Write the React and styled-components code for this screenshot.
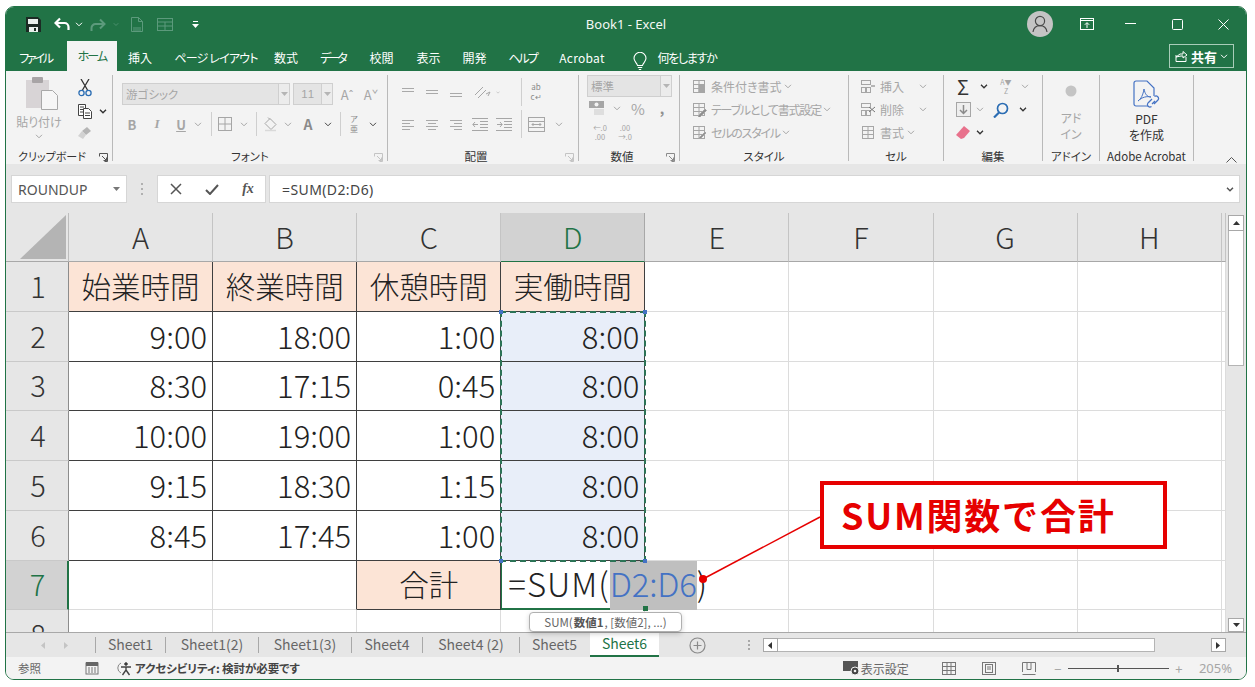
import React from "react";
import styled, { createGlobalStyle } from "styled-components";

const JP = `"Noto Sans CJK JP", "Noto Sans", sans-serif`;

const GlobalStyle = createGlobalStyle`
  html, body {
    margin: 0;
    padding: 0;
    background: #fff;
    overflow: hidden;
  }
  * {
    box-sizing: border-box;
  }
`;

const Page = styled.div`
  width: 1255px;
  height: 687px;
  padding: 6px 0 0 5px;
  font-family: ${JP};
  font-feature-settings: "palt";
`;

const Window = styled.div`
  position: relative;
  width: 1242px;
  height: 674px;
  border: 1px solid #217346;
  border-radius: 9px;
  overflow: hidden;
  display: flex;
  flex-direction: column;
  background: #f3f3f3;
`;

/* title bar */
const TitleBar = styled.div`
  height: 34px;
  flex: none;
  background: #217346;
  display: flex;
  align-items: center;
  color: #fff;
`;

const Slot = styled.span`
  width: ${(p) => p.$w}px;
  flex: none;
  display: inline-flex;
  align-items: center;
  justify-content: center;
  font-size: ${(p) => p.$size || 12}px;
  color: ${(p) => p.$color || "#a6a6a6"};
  font-weight: ${(p) => p.$weight || 400};
  font-style: ${(p) => p.$italic ? "italic" : "normal"};
  text-decoration: ${(p) => p.$under ? "underline" : "none"};
  font-family: ${(p) => p.$serif ? `"Liberation Serif", serif` : "inherit"};
  white-space: nowrap;
`;

const StackSlot = styled(Slot)`
  flex-direction: column;
  line-height: ${(p) => p.$lh}px;
`;

const TitleText = styled.div`
  width: 812px;
  flex: none;
  padding: 0 5px 0 15px;
  font-size: 13px;
  font-family: "Noto Sans", sans-serif;
  text-align: center;
  color: #f4f8f5;
`;

const Avatar = styled.span`
  width: 26px;
  height: 26px;
  flex: none;
  border-radius: 50%;
  background: #c4c4c4;
  display: flex;
  align-items: center;
  justify-content: center;
`;

/* ribbon tabs */
const TabRow = styled.div`
  height: 30px;
  flex: none;
  background: #217346;
  display: flex;
  align-items: flex-end;
  padding-left: 2px;
`;

const RibbonTab = styled.div`
  height: ${(p) => p.$active ? 30 : 28}px;
  width: ${(p) => p.$w}px;
  flex: none;
  display: flex;
  align-items: center;
  justify-content: center;
  font-size: 12px;
  letter-spacing: ${(p) => p.$ls || 0}px;
  color: ${(p) => p.$active ? "#217346" : "#fff"};
  background: ${(p) => p.$active ? "#f3f3f3" : "transparent"};
  padding-bottom: ${(p) => p.$active ? 2 : 0}px;
  white-space: nowrap;
`;

const ShareBtn = styled.div`
  margin-left: auto;
  margin-right: 12px;
  margin-bottom: 3px;
  width: 65px;
  height: 24px;
  border: 1px solid #a9cdb9;
  display: flex;
  align-items: center;
  justify-content: center;
  gap: 3px;
  color: #fff;
  font-size: 13px;
  font-weight: 700;
`;

/* ribbon */
const Ribbon = styled.div`
  height: 93px;
  flex: none;
  display: flex;
  padding-top: 4px;
  padding-bottom: 3px;
  background: #f3f3f3;
  position: relative;
`;

const Group = styled.div`
  width: ${(p) => p.$w}px;
  flex: none;
  display: flex;
  flex-direction: column;
  border-right: 1px solid #b9b9b9;
  position: relative;
`;

const GroupBody = styled.div`
  flex: 1;
  min-height: 0;
  padding: ${(p) => p.$top || 0}px 0 0 ${(p) => p.$left || 0}px;
  display: flex;
  flex-direction: ${(p) => p.$dir || "column"};
`;

const GroupLabel = styled.div`
  height: 16px;
  margin-bottom: -3px;
  line-height: 16px;
  text-align: center;
  font-size: ${(p) => p.$size || 11.5}px;
  color: #333;
  white-space: nowrap;
  padding-right: ${(p) => p.$pr || 0}px;
`;

const Launcher = styled.svg`
  position: absolute;
  right: 4px;
  bottom: -1px;
  width: 9px;
  height: 9px;
`;

const RibRow = styled.div`
  height: ${(p) => p.$h}px;
  display: flex;
  align-items: center;
  padding-left: ${(p) => p.$left || 0}px;
`;

const Combo = styled.div`
  width: ${(p) => p.$w}px;
  height: 22px;
  flex: none;
  margin-right: ${(p) => p.$mr || 0}px;
  background: #e4e4e4;
  border: 1px solid #cfcfcf;
  display: flex;
  align-items: center;
  padding-left: 3px;
  font-size: 11.5px;
  color: #a6a6a6;
`;

const SizeCombo = styled(Combo)`
  font-family: "Liberation Sans", sans-serif;
  letter-spacing: 1px;
`;

const ComboDrop = styled.span`
  margin-left: auto;
  width: 11px;
  height: 20px;
  background: #ececec;
  border-left: 1px solid #cfcfcf;
  display: flex;
  align-items: center;
  justify-content: center;
`;

const Vsep = styled.span`
  width: 1px;
  height: ${(p) => p.$h || 24}px;
  background: #cfcfcf;
  display: block;
`;

const ListText = styled.span`
  font-size: 12px;
  letter-spacing: ${(p) => p.$ls || 0}px;
  color: #a6a6a6;
  white-space: nowrap;
  margin-left: 4px;
`;

const PasteCol = styled.div`
  width: 50px;
  margin-left: 3px;
  display: flex;
  flex-direction: column;
  align-items: center;
  font-size: 12px;
  color: #a6a6a6;
`;

const PasteIcon = styled.svg`
  margin-left: 12px;
  flex: none;
`;

const PasteLabel = styled.span`
  margin-top: 2px;
`;

const PasteCaret = styled.span`
  margin-top: 4px;
  display: flex;
`;

const ClipCol = styled.div`
  display: flex;
  flex-direction: column;
  padding-top: 1px;
`;

const BigCol = styled.div`
  flex: 1;
  display: flex;
  flex-direction: column;
  align-items: center;
  font-size: 12px;
  line-height: 16px;
  color: ${(p) => p.$muted ? "#a6a6a6" : "#333"};
  padding-top: ${(p) => p.$top}px;
`;

const AddinDot = styled.svg`
  flex: none;
  margin-bottom: 13px;
`;

const Collapse = styled.span`
  position: absolute;
  right: 9px;
  bottom: 1px;
  display: flex;
`;

/* formula bar */
const FormulaBar = styled.div`
  height: 49px;
  flex: none;
  background: #e6e6e6;
  padding: 11px 6px 10px 5px;
  display: flex;
`;

const NameBox = styled.div`
  width: 116px;
  background: #fff;
  border: 1px solid #d6d6d6;
  display: flex;
  align-items: center;
  justify-content: space-between;
  padding: 0 6px;
  font-size: 14px;
  font-family: "Noto Sans", sans-serif;
  color: #555;
`;

const FxButtons = styled.div`
  width: 109px;
  background: #fff;
  border: 1px solid #d6d6d6;
  display: flex;
  align-items: center;
  margin-right: 3px;
`;

const FormulaInput = styled.div`
  flex: 1;
  background: #fff;
  border: 1px solid #d6d6d6;
  display: flex;
  align-items: center;
  justify-content: space-between;
  padding: 0 5px 0 12px;
  font-size: 14px;
  letter-spacing: 0.4px;
  font-family: "Noto Sans", sans-serif;
  color: #444;
`;

/* sheet */
const SheetArea = styled.div`
  height: 419px;
  flex: none;
  display: flex;
  background: #fff;
  overflow: hidden;
`;

const Cells = styled.div`
  width: 1220px;
  flex: none;
  position: relative;
  display: grid;
  grid-template-columns: 63px repeat(8, 144.1px) 4.2px;
  grid-template-rows: 49px repeat(8, 49.75px);
  font-size: 29.5px;
  line-height: 1;
  color: #222;
`;

const Corner = styled.div`
  background: #e6e6e6;
  border-bottom: 1px solid #a8a8a8;
  border-right: 1px solid #bdbdbd;
  display: flex;
  align-items: flex-end;
  justify-content: flex-end;
  padding: 0 2px 2px 0;
`;

const ColHead = styled.div`
  background: ${(p) => p.$on ? "#d2d2d2" : "#e6e6e6"};
  color: ${(p) => p.$on ? "#217346" : "#333"};
  border-right: 1px solid ${(p) => p.$on ? "#a8a8a8" : "#c4c4c4"};
  border-bottom: 1px solid ${(p) => p.$on ? "#217346" : "#a8a8a8"};
  display: flex;
  align-items: center;
  justify-content: center;
  font-size: 29px;
  font-weight: 300;
  padding-bottom: 2px;
`;

const RowHead = styled.div`
  background: ${(p) => p.$on ? "#d2d2d2" : "#e6e6e6"};
  color: ${(p) => p.$on ? "#217346" : "#333"};
  border-right: ${(p) => p.$on ? "2px solid #217346" : "1px solid #8c8c8c"};
  border-bottom: 1px solid #c9c9c9;
  display: flex;
  align-items: center;
  justify-content: center;
  font-size: 29px;
  font-weight: 300;
  padding-left: 2px;
  padding-bottom: 2px;
`;

const Cell = styled.div`
  background: ${(p) => p.$bg || "#fff"};
  border-right: 1px solid ${(p) => p.$line || p.$edge ? "#3f3f3f" : "#dcdcdc"};
  border-bottom: 1px solid ${(p) => p.$line ? "#3f3f3f" : "#dcdcdc"};
  display: flex;
  align-items: center;
  justify-content: ${(p) => p.$right ? "flex-end" : "center"};
  padding-right: ${(p) => p.$right ? 5 : 0}px;
  padding-bottom: 2px;
  font-size: ${(p) => p.$right ? 31 : 29.5}px;
  font-weight: 300;
  white-space: nowrap;
`;

const ActiveCell = styled.div`
  background: #fff;
  border-left: 1px solid #217346;
  border-bottom: 2px solid #217346;
  display: flex;
  align-items: stretch;
  padding-left: 6px;
  font-size: 33px;
  font-weight: 300;
  white-space: nowrap;
  position: relative;
  z-index: 2;
`;

const CellText = styled.span`
  display: flex;
  align-items: center;
  padding-bottom: 2px;
  flex: none;
`;

const FuncText = styled(CellText)`
  letter-spacing: 1px;
`;

const RefText = styled(CellText)`
  background: #bfbfbf;
  color: #4472c4;
  margin-bottom: -2px;
  padding-bottom: 4px;
  letter-spacing: -0.2px;
`;

const Marquee = styled.div`
  position: absolute;
  grid-column: 5 / 6;
  grid-row: 3 / 8;
  inset: -1px;
  border: 2px dashed #2c7356;
  z-index: 3;
`;

const Handle = styled.span`
  position: absolute;
  width: 4px;
  height: 4px;
  background: #4472c4;
  ${(p) => p.$y}: -3px;
  ${(p) => p.$x}: -3px;
`;

const FillHandle = styled.span`
  position: absolute;
  right: -3px;
  bottom: -3px;
  width: 5px;
  height: 5px;
  background: #217346;
`;

/* vertical scroll */
const VScroll = styled.div`
  flex: 1;
  background: #e6e6e6;
  padding: 2px 2px 0 2px;
  display: flex;
  flex-direction: column;
  align-items: stretch;
`;

const ScrollBtn = styled.div`
  width: ${(p) => p.$w || "auto"};
  height: ${(p) => p.$h || 16}px;
  flex: none;
  background: #fff;
  border: 1px solid #a8a8a8;
  display: flex;
  align-items: center;
  justify-content: center;
`;

const VThumb = styled.div`
  height: 135px;
  flex: none;
  background: #fff;
  border: 1px solid #b4b4b4;
  border-top: 0;
`;

const VSpacer = styled.div`
  flex: 1;
`;

/* sheet tabs */
const SheetBar = styled.div`
  height: 25px;
  flex: none;
  background: #e6e6e6;
  border-top: 1px solid #a8a8a8;
  display: flex;
  align-items: center;
  font-size: 14px;
  font-family: ${JP};
  font-feature-settings: normal;
  color: #666;
`;

const SheetTab = styled.div`
  height: 24px;
  flex: none;
  width: ${(p) => p.$w}px;
  display: flex;
  align-items: center;
  justify-content: center;
  padding-bottom: 2px;
  color: ${(p) => p.$active ? "#217346" : "#666"};
  background: ${(p) => p.$active ? "#fff" : "transparent"};
  border-bottom: ${(p) => p.$active ? "2px solid #217346" : "0"};
  margin-left: ${(p) => p.$active ? 1 : 0}px;
  white-space: nowrap;
`;

const TabSep = styled.span`
  width: 1px;
  height: 16px;
  background: #a8a8a8;
  flex: none;
`;

const HScroll = styled.div`
  width: 377px;
  height: 14px;
  flex: none;
  background: #fff;
  border: 1px solid #b4b4b4;
  border-left: 0;
`;

/* status bar */
const StatusBar = styled.div`
  height: 22px;
  flex: none;
  background: #f3f3f3;
  display: flex;
  align-items: center;
  font-size: 11.5px;
  color: #666;
  padding-left: 12px;
`;

const A11y = styled.span`
  font-weight: 700;
  color: #444;
  margin-left: 3px;
  letter-spacing: -0.1px;
  white-space: nowrap;
`;

const ViewSetting = styled.span`
  font-size: 12px;
  white-space: nowrap;
`;

const Zoomer = styled.span`
  width: 101px;
  height: 1px;
  background: #555;
  flex: none;
  position: relative;
  display: block;
`;

const ZoomTick = styled.span`
  position: absolute;
  left: 49px;
  top: -3px;
  width: 2px;
  height: 7px;
  background: #555;
`;

const ZoomPct = styled.span`
  font-size: 13px;
  font-family: "Noto Sans", sans-serif;
  color: #a6a6a6;
  margin-left: 10px;
`;

const StatusRight = styled.div`
  margin-left: auto;
  display: flex;
  align-items: center;
`;

/* overlays */
const Tooltip = styled.div`
  position: absolute;
  left: 523px;
  top: 605px;
  width: 153px;
  height: 20px;
  background: #fff;
  border: 1px solid #b0b0b0;
  border-radius: 4px;
  box-shadow: 0 2px 5px rgba(0, 0, 0, 0.18);
  display: flex;
  align-items: center;
  justify-content: center;
  font-size: 11.5px;
  color: #666;
  white-space: nowrap;
  z-index: 5;
  b {
    color: #555;
    margin: 0 1px;
  }
`;

const Callout = styled.div`
  position: absolute;
  left: 814px;
  top: 474px;
  width: 347px;
  height: 68px;
  background: #fff;
  border: 4px solid #e60000;
  display: flex;
  align-items: center;
  padding-left: 17px;
  padding-bottom: 2px;
  color: #e60000;
  font-size: 36px;
  font-weight: 700;
  font-feature-settings: normal;
  letter-spacing: 1.8px;
  white-space: nowrap;
  z-index: 6;
`;

const Leader = styled.svg`
  position: absolute;
  left: 684px;
  top: 502px;
  width: 135px;
  height: 80px;
  z-index: 6;
`;

/* icons */
const Caret = ({ c = "#a6a6a6", sw = 1 }) => (
  <svg width="8" height="5" viewBox="0 0 8 5" fill="none" stroke={c} strokeWidth={sw}>
    <path d="M1 .8l3 3 3-3" />
  </svg>
);

const Tri = ({ dir = "down", c = "#333" }) => {
  const d = { down: "M0 1h7L3.5 5z", up: "M0 5h7L3.5 1z", left: "M5 0v7L1 3.5z", right: "M1 0v7l4-3.5z" }[dir];
  return (
    <svg width="7" height="7" viewBox="0 0 7 7" fill={c}>
      <path d={d} />
    </svg>
  );
};

const Lines = ({ rows, c = "#a9a9a9" }) => (
  <svg width="14" height="12" viewBox="0 0 14 12" stroke={c} strokeWidth="1">
    {rows.map(([y, x1, x2]) => (
      <line key={y} x1={x1} x2={x2} y1={y + 0.5} y2={y + 0.5} />
    ))}
  </svg>
);

const LauncherIcon = ({ c = "#8a8a8a" }) => (
  <Launcher viewBox="0 0 9 9" fill="none" stroke={c}>
    <path d="M.5 3.5v-3h8v8h-3M3 3l4.5 4.5M7.5 4.5v3h-3" />
  </Launcher>
);

const CellGlyph = ({ kind }) => (
  <svg width="16" height="15" viewBox="0 0 16 15" fill="none" stroke="#a6a6a6">
    <rect x="2.5" y="1.5" width="11" height="12" />
    <path d="M2.5 5.5h11M2.5 9.5h11M8 1.5v12" />
    {kind === "cond" && <rect x="8" y="6" width="5" height="7" fill="#a6a6a6" />}
    {kind === "table" && <path d="M7 14l7-7 1.5 1.5-7 7z" fill="#8f8f8f" />}
    {kind === "style" && <path d="M8 13l6-6 1 1-6 6z" fill="#8f8f8f" />}
  </svg>
);

const InsGlyph = ({ x }) => (
  <svg width="16" height="15" viewBox="0 0 16 15" fill="none" stroke="#a6a6a6">
    <rect x="1.5" y="1.5" width="9" height="4" />
    <rect x="1.5" y="8.5" width="4" height="5" />
    <rect x="6.5" y="8.5" width="4" height="5" />
    {x ? <path d="M9 5l6 5m0-5l-6 5" stroke="#777" /> : <path d="M11 7h4" stroke="#777" />}
  </svg>
);

const columns = ["A", "B", "C", "D", "E", "F", "G", "H"];
const heads = ["始業時間", "終業時間", "休憩時間", "実働時間"];
const data = [
  ["9:00", "18:00", "1:00", "8:00"],
  ["8:30", "17:15", "0:45", "8:00"],
  ["10:00", "19:00", "1:00", "8:00"],
  ["9:15", "18:30", "1:15", "8:00"],
  ["8:45", "17:45", "1:00", "8:00"],
];
// label, width, letter-spacing, active
const ribbonTabs = [
  ["ファイル", 55, -2.2], ["ホーム", 50, -2, true], ["挿入", 46, 0], ["ページ レイアウト", 106, -0.8], ["数式", 34, 0],
  ["データ", 59, -3], ["校閲", 39, 0], ["表示", 55, 0], ["開発", 37, 0], ["ヘルプ", 59, -2], ["Acrobat", 60, 0.3],
];

const Blanks = ({ n, row }) =>
  Array.from({ length: n }).map((_, i) => <Cell key={`${row}-${i}`} />);

const App = () => {
  return (
    <Page>
      <GlobalStyle />
      <Window>
        <TitleBar>
          <Slot $w={16} />
          <Slot $w={22}>
            <svg width="15" height="15" viewBox="0 0 15 15">
              <path d="M0 0h12l3 3v12H0z" fill="#1c2b24" />
              <rect x="2" y="2" width="10" height="5" fill="#e8f0eb" />
              <rect x="3" y="10" width="9" height="5" fill="#e8f0eb" />
              <rect x="8" y="11" width="2" height="3" fill="#1c2b24" />
            </svg>
          </Slot>
          <Slot $w={5} />
          <Slot $w={26}>
            <svg width="17" height="14" viewBox="0 0 17 14" fill="none" stroke="#fff" strokeWidth="2.2">
              <path d="M1.5 6h9a4 4 0 0 1 4 4v3M6 1.5L1.5 6 6 10.5" />
            </svg>
          </Slot>
          <Slot $w={8}><Caret c="#fff" /></Slot>
          <Slot $w={30}>
            <svg width="16" height="13" viewBox="0 0 16 13" fill="none" stroke="#5c9a7c" strokeWidth="2">
              <path d="M14.5 6h-9a4 4 0 0 0-4 4v3M10 1.5L14.5 6 10 10.5" />
            </svg>
          </Slot>
          <Slot $w={6}><Caret c="#5c9a7c" /></Slot>
          <Slot $w={36}>
            <svg width="12" height="15" viewBox="0 0 12 15" fill="none" stroke="#5c9a7c">
              <path d="M.5.5h7l4 4v10H.5zM7.5.5v4h4M2 11h8M2 13h8" />
            </svg>
          </Slot>
          <Slot $w={20}>
            <svg width="16" height="13" viewBox="0 0 16 13" fill="none" stroke="#5c9a7c">
              <rect x=".5" y=".5" width="15" height="12" />
              <path d="M.5 4h15M.5 8h15M8 4v8" />
            </svg>
          </Slot>
          <Slot $w={40}>
            <svg width="7" height="7" viewBox="0 0 7 7" fill="#fff">
              <rect x="1" y="0" width="5" height="1" />
              <path d="M0 3h7L3.5 7z" />
            </svg>
          </Slot>
          <TitleText>Book1 - Excel</TitleText>
          <Avatar>
            <svg width="16" height="18" viewBox="0 0 16 18" fill="none" stroke="#4a4a4a" strokeWidth="1.2">
              <circle cx="8" cy="6" r="4.6" />
              <path d="M1 17c.6-4 3-6.4 7-6.4s6.4 2.4 7 6.4" />
            </svg>
          </Avatar>
          <Slot $w={21} />
          <Slot $w={26}>
            <svg width="14" height="12" viewBox="0 0 14 12" fill="none" stroke="#fff">
              <rect x=".5" y=".5" width="13" height="11" />
              <path d="M.5 2.5h13M7 10V5M4.8 6.8L7 4.6l2.2 2.2" />
            </svg>
          </Slot>
          <Slot $w={17} />
          <Slot $w={26}>
            <svg width="11" height="2" viewBox="0 0 11 2"><rect width="11" height="1" fill="#fff" /></svg>
          </Slot>
          <Slot $w={21} />
          <Slot $w={26}>
            <svg width="11" height="11" viewBox="0 0 11 11" fill="none" stroke="#fff">
              <rect x=".5" y=".5" width="10" height="10" rx="1" />
            </svg>
          </Slot>
          <Slot $w={20} />
          <Slot $w={26}>
            <svg width="11" height="11" viewBox="0 0 11 11" fill="none" stroke="#fff">
              <path d="M.5.5l10 10m0-10l-10 10" />
            </svg>
          </Slot>
        </TitleBar>

        <TabRow>
          {ribbonTabs.map(([t, w, ls, on]) => (
            <React.Fragment key={t}>
              {on && <Slot $w={4} />}
              <RibbonTab $w={w} $ls={ls} $active={on}>{t}</RibbonTab>
            </React.Fragment>
          ))}
          <Slot $w={56}>
            <svg width="14" height="19" viewBox="0 0 14 19" fill="none" stroke="#fff" strokeWidth="1.1">
              <path d="M4.5 13.5C4 11 1 9.5 1 6.3a6 6 0 0 1 12 0c0 3.2-3 4.700-3.500 7.200zM4.800 15.500h4.400M5.800 17.500h2.400" />
            </svg>
          </Slot>
          <RibbonTab $w={38} $ls={-1.3}>何をしますか</RibbonTab>
          <ShareBtn>
            <svg width="13" height="12" viewBox="0 0 13 12" fill="none" stroke="#fff">
              <path d="M1 5v6.500h10V7M1 7l4-3h3V1.500l4 3.500-4 3V6H6z" />
            </svg>
            共有
            <Caret c="#fff" />
          </ShareBtn>
        </TabRow>

        <Ribbon>
          <Group $w={107}>
            <GroupBody $dir="row" $left={5}>
              <PasteCol>
                <PasteIcon width="38" height="36" viewBox="0 0 38 36">
                  <rect x="0" y="5" width="23" height="28" fill="#d8d4d6" />
                  <rect x="6" y="2" width="11" height="6" rx="1" fill="#a8a4a6" />
                  <path d="M15.500 15.500h11l5 5v14h-16z" fill="#f6f6f6" stroke="#a8a8a8" />
                </PasteIcon>
                <PasteLabel>貼り付け</PasteLabel>
                <PasteCaret><Caret /></PasteCaret>
              </PasteCol>
              <ClipCol>
                <RibRow $h={24}>
                  <Slot $w={14} />
                  <svg width="14" height="18" viewBox="0 0 14 18" fill="none" stroke="#333" strokeWidth="1.3">
                    <path d="M3 0l6.500 11M11 0L4.500 11" />
                    <circle cx="3.500" cy="14" r="2.600" stroke="#2b6db3" />
                    <circle cx="10.500" cy="14" r="2.600" stroke="#2b6db3" />
                  </svg>
                </RibRow>
                <RibRow $h={22}>
                  <Slot $w={14} />
                  <svg width="14" height="15" viewBox="0 0 14 15" fill="#fff" stroke="#444">
                    <path d="M.5.5h7v11h-7zM2 3h4M2 5.500h4M2 8h4" />
                    <path d="M5.500 4.500h5l3 3v7h-8z" />
                    <path d="M7 9h5M7 11.500h5" />
                  </svg>
                  <Slot $w={22}><Caret c="#333" sw={1.4} /></Slot>
                </RibRow>
                <RibRow $h={23}>
                  <Slot $w={14} />
                  <svg width="14" height="13" viewBox="0 0 14 13">
                    <path d="M9 0l4 4-5 4-4-4z" fill="#b5b5b5" />
                    <path d="M4 4l4 4-3 4-5-3z" fill="#d2d2d2" />
                  </svg>
                </RibRow>
              </ClipCol>
            </GroupBody>
            <GroupLabel $pr={14} $size={11}>クリップボード</GroupLabel>
            <LauncherIcon c="#555" />
          </Group>

          <Group $w={275}>
            <GroupBody $top={8} $left={9}>
              <RibRow $h={22}>
                <Combo $w={168} $mr={3}>游ゴシック<ComboDrop><Tri c="#b5b5b5" /></ComboDrop></Combo>
                <SizeCombo $w={40}>
                  &nbsp;11<ComboDrop><Tri c="#b5b5b5" /></ComboDrop>
                </SizeCombo>
                <Slot $w={28} $size={13}>A<sup>ˆ</sup></Slot>
                <Slot $w={20} $size={13}>A<sup>ˇ</sup></Slot>
              </RibRow>
              <RibRow $h={38}>
                <Slot $w={20} $size={13} $weight={700}>B</Slot>
                <Slot $w={30} $size={13} $weight={700} $italic $serif>I</Slot>
                <Slot $w={18} $size={13} $weight={700} $under>U</Slot>
                <Slot $w={16}><Caret /></Slot>
                <Slot $w={10}><Vsep /></Slot>
                <Slot $w={18}>
                  <svg width="14" height="14" viewBox="0 0 14 14" fill="none" stroke="#a6a6a6">
                    <rect x=".5" y=".5" width="13" height="13" />
                    <path d="M7 .5v13M.5 7h13" />
                  </svg>
                </Slot>
                <Slot $w={20}><Caret /></Slot>
                <Slot $w={4}><Vsep /></Slot>
                <Slot $w={24}>
                  <svg width="15" height="15" viewBox="0 0 15 15" fill="none" stroke="#a6a6a6">
                    <path d="M7 1.500l6 6-5 5-6-6zM5 .5l2 2" />
                    <path d="M2 13.500h11" stroke="#d9d9d9" strokeWidth="1.500" />
                  </svg>
                </Slot>
                <Slot $w={12}><Caret /></Slot>
                <Slot $w={28} $size={14} $weight={700} $color="#8a8a8a">A</Slot>
                <Slot $w={12}><Caret c="#444" /></Slot>
                <Slot $w={12}><Vsep /></Slot>
                <StackSlot $w={16} $size={8} $lh={10} $color="#8a8a8a">
                  <span>ア</span><span>亜</span>
                </StackSlot>
                <Slot $w={22}><Caret c="#444" /></Slot>
              </RibRow>
            </GroupBody>
            <GroupLabel>フォント</GroupLabel>
            <LauncherIcon c="#c4c4c4" />
          </Group>

          <Group $w={191}>
            <GroupBody $top={1} $left={8}>
              <RibRow $h={32}>
                <Slot $w={24}><Lines rows={[[2, 1, 13], [5, 1, 13]]} /></Slot>
                <Slot $w={24}><Lines rows={[[4, 1, 13], [7, 1, 13]]} /></Slot>
                <Slot $w={24}><Lines rows={[[7, 1, 13], [10, 1, 13]]} /></Slot>
                <Slot $w={28}>
                  <svg width="17" height="15" viewBox="0 0 17 15" fill="none" stroke="#a6a6a6">
                    <path d="M1 10l8-8M4 13L12 5M12 9l4-2-2 4" />
                  </svg>
                </Slot>
                <Slot $w={4}><Caret /></Slot>
                <Slot $w={19} />
                <Slot $w={4}><Vsep $h={28} /></Slot>
                <StackSlot $w={26} $size={8} $lh={10} $color="#8a8a8a">
                  <span>ab</span><span>c↵</span>
                </StackSlot>
              </RibRow>
              <RibRow $h={32}>
                <Slot $w={24}><Lines rows={[[2, 1, 13], [5, 1, 9], [8, 1, 13], [11, 1, 9]]} /></Slot>
                <Slot $w={24}><Lines rows={[[2, 1, 13], [5, 3, 11], [8, 1, 13], [11, 3, 11]]} /></Slot>
                <Slot $w={24}><Lines rows={[[2, 1, 13], [5, 5, 13], [8, 1, 13], [11, 5, 13]]} /></Slot>
                <Slot $w={24}>
                  <svg width="16" height="13" viewBox="0 0 16 13" fill="none" stroke="#a6a6a6">
                    <path d="M0 .5h16M8 3.500h8M8 6.500h8M8 9.500h8M0 12.500h16M6 6.500H1M3 4L.8 6.500 3 9" />
                  </svg>
                </Slot>
                <Slot $w={24}>
                  <svg width="16" height="13" viewBox="0 0 16 13" fill="none" stroke="#a6a6a6">
                    <path d="M0 .5h16M8 3.500h8M8 6.500h8M8 9.500h8M0 12.500h16M1 6.500h5M4 4l2.200 2.500L4 9" />
                  </svg>
                </Slot>
                <Slot $w={3} />
                <Slot $w={4}><Vsep $h={28} /></Slot>
                <Slot $w={26}>
                  <svg width="17" height="15" viewBox="0 0 17 15" fill="none" stroke="#a6a6a6">
                    <rect x=".5" y=".5" width="16" height="14" />
                    <path d="M.5 4.500h16M.5 10.500h16M4 7.500h9M5.500 6L4 7.500 5.500 9M11.500 6L13 7.500 11.500 9" />
                  </svg>
                </Slot>
                <Slot $w={20}><Caret /></Slot>
              </RibRow>
            </GroupBody>
            <GroupLabel $pr={14}>配置</GroupLabel>
            <LauncherIcon c="#c4c4c4" />
          </Group>

          <Group $w={101}>
            <GroupBody $left={8}>
              <RibRow $h={22}>
                <Combo $w={85}>標準<ComboDrop><Tri c="#b5b5b5" /></ComboDrop></Combo>
              </RibRow>
              <RibRow $h={22}>
                <Slot $w={20}>
                  <svg width="16" height="14" viewBox="0 0 16 14">
                    <rect x="0" y="0" width="15" height="7" fill="#a6a6a6" />
                    <circle cx="7.500" cy="3.500" r="2" fill="#f3f3f3" />
                    <path d="M5 9h10M5 11h10M5 13h10" stroke="#c9c9c9" />
                  </svg>
                </Slot>
                <Slot $w={20}><Caret /></Slot>
                <Slot $w={22} $size={15}>%</Slot>
                <Slot $w={26} $size={14} $weight={700} $color="#8f8f8f">,</Slot>
              </RibRow>
              <RibRow $h={26}>
                <StackSlot $w={26} $size={7.5} $lh={9}>
                  <span>←.0</span><span>.00</span>
                </StackSlot>
                <StackSlot $w={24} $size={7.5} $lh={9}>
                  <span>.00</span><span>→.0</span>
                </StackSlot>
              </RibRow>
            </GroupBody>
            <GroupLabel $pr={14}>数値</GroupLabel>
            <LauncherIcon />
          </Group>

          <Group $w={169}>
            <GroupBody $left={11}>
              <RibRow $h={23}><CellGlyph kind="cond" /><ListText>条件付き書式</ListText><Slot $w={12}><Caret /></Slot></RibRow>
              <RibRow $h={23}><CellGlyph kind="table" /><ListText $ls={-1.2}>テーブルとして書式設定</ListText><Slot $w={12}><Caret /></Slot></RibRow>
              <RibRow $h={23}><CellGlyph kind="style" /><ListText $ls={-1.2}>セルのスタイル</ListText><Slot $w={12}><Caret /></Slot></RibRow>
            </GroupBody>
            <GroupLabel>スタイル</GroupLabel>
          </Group>

          <Group $w={95}>
            <GroupBody $left={11}>
              <RibRow $h={23}><InsGlyph /><ListText>挿入</ListText><Slot $w={38}><Caret /></Slot></RibRow>
              <RibRow $h={23}><InsGlyph x /><ListText>削除</ListText><Slot $w={38}><Caret /></Slot></RibRow>
              <RibRow $h={23}><CellGlyph kind="fmt" /><ListText>書式</ListText><Slot $w={14}><Caret /></Slot></RibRow>
            </GroupBody>
            <GroupLabel>セル</GroupLabel>
          </Group>

          <Group $w={99}>
            <GroupBody $left={10}>
              <RibRow $h={23}>
                <Slot $w={18} $size={20} $color="#333">Σ</Slot>
                <Slot $w={24}><Caret c="#333" sw={1.3} /></Slot>
                <StackSlot $w={20} $size={7} $lh={9}>
                  <span>A▼</span><span>Z</span>
                </StackSlot>
                <Slot $w={18}><Caret /></Slot>
              </RibRow>
              <RibRow $h={23}>
                <Slot $w={18}>
                  <svg width="15" height="15" viewBox="0 0 15 15" fill="none" stroke="#a6a6a6">
                    <rect x=".5" y=".5" width="14" height="14" fill="#eee" />
                    <path d="M7.500 3v8M4 8l3.500 3.500L11 8" strokeWidth="1.500" stroke="#8a8a8a" />
                  </svg>
                </Slot>
                <Slot $w={15}><Caret /></Slot>
                <Slot $w={28}>
                  <svg width="16" height="16" viewBox="0 0 16 16" fill="none" stroke="#2b6db3" strokeWidth="1.700">
                    <circle cx="9.500" cy="6.500" r="5" />
                    <path d="M6 10.500L1 15.500" strokeWidth="2.200" />
                  </svg>
                </Slot>
                <Slot $w={16}><Caret c="#333" sw={1.3} /></Slot>
              </RibRow>
              <RibRow $h={23}>
                <Slot $w={18}>
                  <svg width="14" height="13" viewBox="0 0 14 13">
                    <path d="M8 0l6 5-6 7-3 1-5-4z" fill="#e8718c" />
                  </svg>
                </Slot>
                <Slot $w={15}><Caret c="#333" sw={1.3} /></Slot>
              </RibRow>
            </GroupBody>
            <GroupLabel>編集</GroupLabel>
          </Group>

          <Group $w={57}>
            <BigCol $top={10} $muted>
              <AddinDot width="12" height="12" viewBox="0 0 12 12">
                <circle cx="6" cy="6" r="5.500" fill="#c4c4c4" />
              </AddinDot>
              <span>アド</span>
              <span>イン</span>
            </BigCol>
            <GroupLabel>アドイン</GroupLabel>
          </Group>

          <Group $w={94}>
            <BigCol $top={5}>
              <svg width="27" height="31" viewBox="0 0 27 31" fill="none" stroke="#4472c4" strokeWidth="1.200">
                <path d="M15 26H3a2 2 0 0 1-2-2V3a2 2 0 0 1 2-2h11l7 7v8" />
                <path d="M5 21c3-2 5-6 6-12 1 5 3 8 7 8-4-1-9 0-13 4z" strokeWidth="1" />
                <path d="M19 19l-4 4a2.500 2.500 0 0 0 3.500 3.500M21 24l4-4a2.500 2.500 0 0 0-3.500-3.500M19 24l3-3" />
              </svg>
              <span>PDF</span>
              <span>を作成</span>
            </BigCol>
            <GroupLabel>Adobe Acrobat</GroupLabel>
          </Group>

          <Collapse>
            <svg width="11" height="6" viewBox="0 0 11 6" fill="none" stroke="#555">
              <path d="M.5 5.500l5-5 5 5" />
            </svg>
          </Collapse>
        </Ribbon>

        <FormulaBar>
          <NameBox>ROUNDUP<Tri c="#777" /></NameBox>
          <Slot $w={30}>
            <svg width="3" height="13" viewBox="0 0 3 13" fill="#b0b0b0">
              <rect y="0" width="2" height="2" /><rect y="5" width="2" height="2" /><rect y="10" width="2" height="2" />
            </svg>
          </Slot>
          <FxButtons>
            <Slot $w={36}>
              <svg width="12" height="12" viewBox="0 0 12 12" fill="none" stroke="#555" strokeWidth="1.500">
                <path d="M1 1l10 10m0-10L1 11" />
              </svg>
            </Slot>
            <Slot $w={36}>
              <svg width="14" height="11" viewBox="0 0 14 11" fill="none" stroke="#555" strokeWidth="2">
                <path d="M1 6l4 4 8-9" />
              </svg>
            </Slot>
            <Slot $w={36} $size={14} $color="#555" $italic $serif $weight={700}>fx</Slot>
          </FxButtons>
          <FormulaInput>=SUM(D2:D6)<Caret c="#555" sw={1.5} /></FormulaInput>
        </FormulaBar>

        <SheetArea>
          <Cells>
            <Corner>
              <svg width="46" height="44" viewBox="0 0 46 44"><path d="M46 0v44H0z" fill="#b4b4b4" /></svg>
            </Corner>
            {columns.map((c) => <ColHead key={c} $on={c === "D"}>{c}</ColHead>)}
            <ColHead />

            <RowHead>1</RowHead>
            {heads.map((h) => <Cell key={h} $bg="#fce4d6" $line>{h}</Cell>)}
            <Blanks n={5} row="h" />

            {data.map((row, i) => (
              <React.Fragment key={i}>
                <RowHead>{i + 2}</RowHead>
                {row.map((v, j) => (
                  <Cell key={j} $right $line $bg={j === 3 ? "#e8eef9" : "#fff"}>{v}</Cell>
                ))}
                <Blanks n={5} row={i} />
              </React.Fragment>
            ))}

            <RowHead $on>7</RowHead>
            <Cell />
            <Cell $edge />
            <Cell $bg="#fce4d6" $line>合計</Cell>
            <ActiveCell>
              <FuncText>=SUM(</FuncText>
              <RefText>D2:D6</RefText>
              <CellText>)</CellText>
              <FillHandle />
            </ActiveCell>
            <Blanks n={5} row="s" />

            <RowHead>8</RowHead>
            <Blanks n={9} row="e" />

            <Marquee>
              <Handle $x="left" $y="top" />
              <Handle $x="right" $y="top" />
              <Handle $x="left" $y="bottom" />
              <Handle $x="right" $y="bottom" />
            </Marquee>
          </Cells>
          <VScroll>
            <ScrollBtn><Tri dir="up" /></ScrollBtn>
            <VThumb />
            <VSpacer />
            <ScrollBtn $h={14}><Tri dir="down" /></ScrollBtn>
          </VScroll>
        </SheetArea>

        <SheetBar>
          <Slot $w={24} />
          <Slot $w={26}><Tri dir="left" c="#c4c4c4" /></Slot>
          <Slot $w={4} />
          <Slot $w={12}><Tri dir="right" c="#c4c4c4" /></Slot>
          <Slot $w={23} />
          <TabSep />
          <SheetTab $w={69}>Sheet1</SheetTab>
          <TabSep />
          <SheetTab $w={92}>Sheet1(2)</SheetTab>
          <TabSep />
          <SheetTab $w={92}>Sheet1(3)</SheetTab>
          <TabSep />
          <SheetTab $w={70}>Sheet4</SheetTab>
          <TabSep />
          <SheetTab $w={96}>Sheet4 (2)</SheetTab>
          <TabSep />
          <SheetTab $w={69}>Sheet5</SheetTab>
          <SheetTab $w={69} $active>Sheet6</SheetTab>
          <Slot $w={30} />
          <Slot $w={17}>
            <svg width="17" height="17" viewBox="0 0 17 17" fill="none" stroke="#8a8a8a" strokeWidth="1.200">
              <circle cx="8.500" cy="8.500" r="7.500" />
              <path d="M8.500 4.500v8M4.500 8.500h8" />
            </svg>
          </Slot>
          <Slot $w={42} />
          <Slot $w={3}>
            <svg width="3" height="11" viewBox="0 0 3 11" fill="#a8a8a8">
              <rect y="0" width="2" height="2" /><rect y="4" width="2" height="2" /><rect y="8" width="2" height="2" />
            </svg>
          </Slot>
          <Slot $w={12} />
          <ScrollBtn $w="15px" $h={14}><Tri dir="left" /></ScrollBtn>
          <HScroll />
          <Slot $w={56} />
          <ScrollBtn $w="15px" $h={14}><Tri dir="right" /></ScrollBtn>
        </SheetBar>

        <StatusBar>
          <span>参照</span>
          <Slot $w={44} />
          <svg width="14" height="13" viewBox="0 0 14 13">
            <rect x="1" y="1" width="12" height="11" fill="none" stroke="#777" />
            <rect x="1" y="0" width="12" height="4" fill="#666" />
            <path d="M3 6h8M3 8h8M3 10h8" stroke="#777" strokeDasharray="2 1" />
          </svg>
          <Slot $w={16} />
          <svg width="17" height="15" viewBox="0 0 17 15" fill="none" stroke="#444">
            <path d="M6 2a5.500 5.500 0 0 0 0 10" stroke="#888" />
            <circle cx="11" cy="3" r="1.300" fill="#333" />
            <path d="M6 6h10M11 6v3l-3.500 5M11 9l3.500 5" strokeWidth="1.400" />
          </svg>
          <A11y>アクセシビリティ: 検討が必要です</A11y>
          <StatusRight>
            <svg width="18" height="15" viewBox="0 0 18 15">
              <rect x="0" y="0" width="15" height="10" fill="#555" />
              <circle cx="12" cy="10" r="4" fill="#444" stroke="#f3f3f3" />
              <circle cx="12" cy="10" r="1.300" fill="#f3f3f3" />
            </svg>
            <ViewSetting>表示設定</ViewSetting>
            <Slot $w={33} />
            <svg width="14" height="13" viewBox="0 0 14 13" fill="none" stroke="#777">
              <rect x=".5" y=".5" width="13" height="12" />
              <path d="M5 .5v12M9 .5v12M.5 4.500h13M.5 8.500h13" />
            </svg>
            <Slot $w={26} />
            <svg width="14" height="13" viewBox="0 0 14 13" fill="none" stroke="#777">
              <rect x=".5" y=".5" width="13" height="12" />
              <rect x="3.500" y="2.500" width="7" height="8" />
              <path d="M5 5h4M5 7h4" />
            </svg>
            <Slot $w={26} />
            <svg width="14" height="13" viewBox="0 0 14 13" fill="none" stroke="#777">
              <path d="M.5 10V.5h13V10M.5 12.500h13M5 .5v7h4v-7" />
            </svg>
            <Slot $w={12} />
            <Slot $w={20} $size={13}>−</Slot>
            <Zoomer><ZoomTick /></Zoomer>
            <Slot $w={20} $size={13}>+</Slot>
            <ZoomPct>205%</ZoomPct>
            <Slot $w={14} />
          </StatusRight>
        </StatusBar>

        <Tooltip>
          SUM(<b>数値1</b>, [数値2], ...)
        </Tooltip>

        <Leader viewBox="0 0 135 80">
          <line x1="130" y1="8" x2="13" y2="70" stroke="#e60000" strokeWidth="1.500" />
          <circle cx="13" cy="70" r="4" fill="#e60000" />
        </Leader>
        <Callout>SUM関数で合計</Callout>
      </Window>
    </Page>
  );
};

export default App;
